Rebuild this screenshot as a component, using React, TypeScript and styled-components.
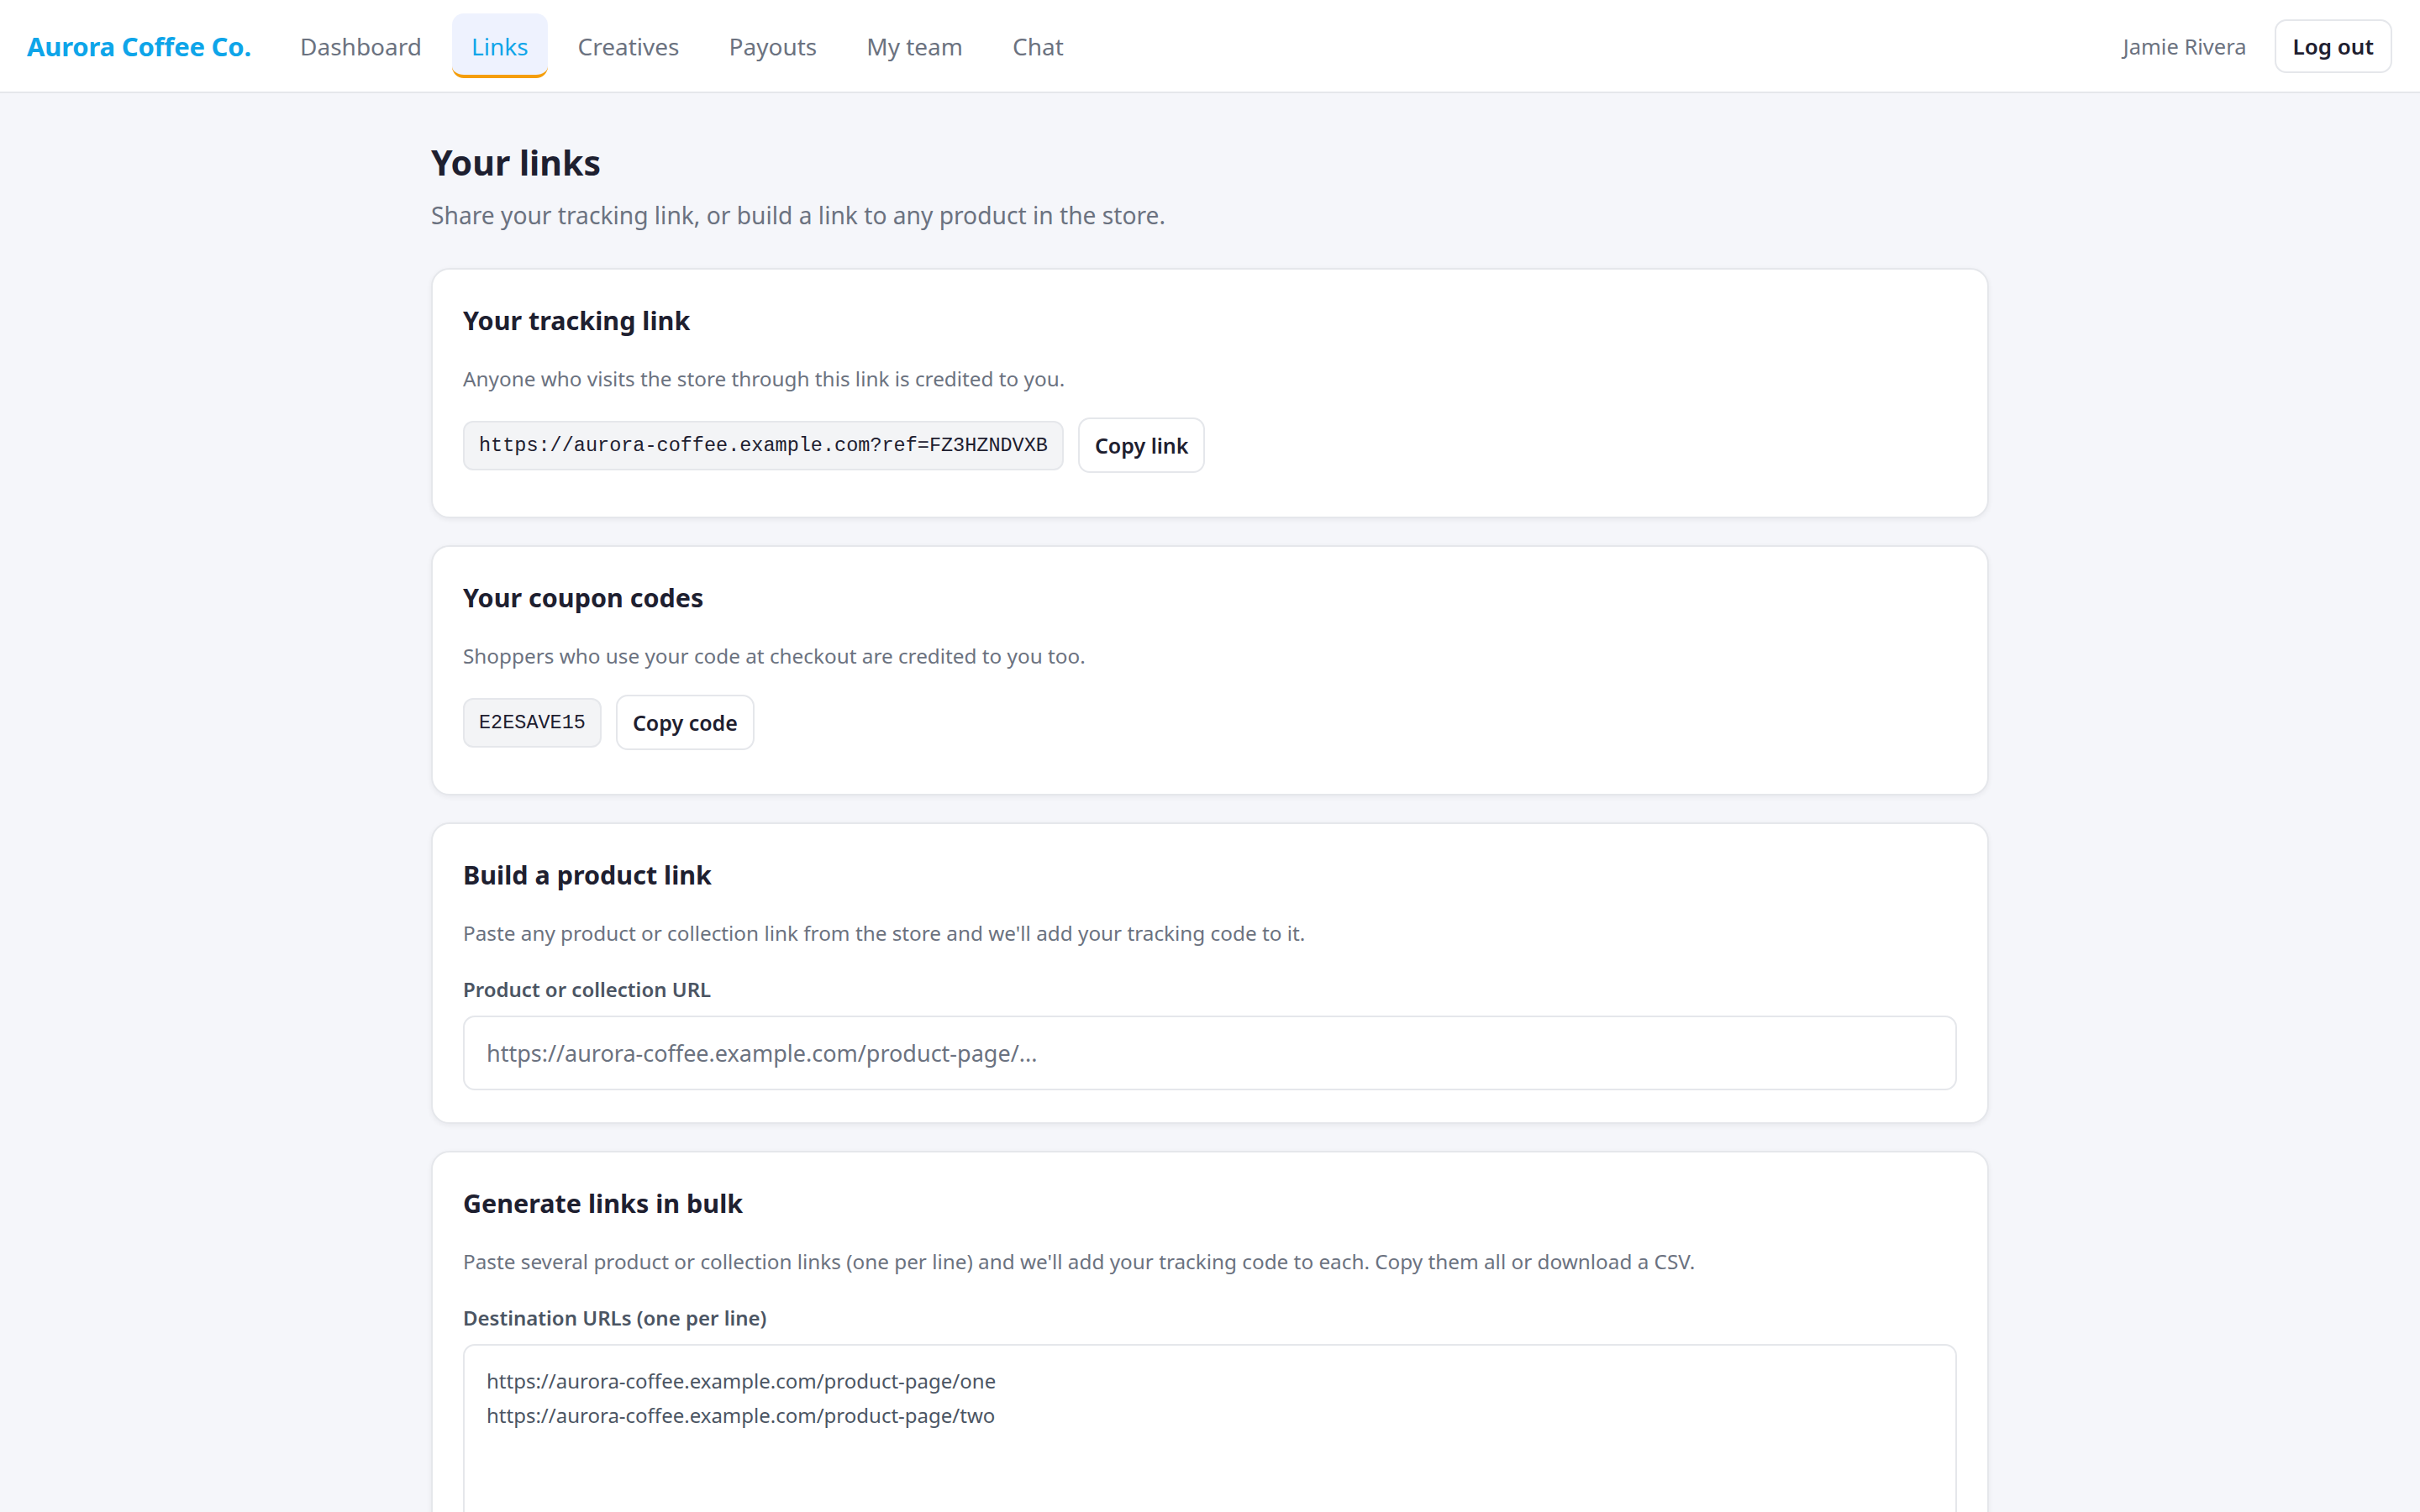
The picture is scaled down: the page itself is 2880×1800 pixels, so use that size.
import React, { useState } from 'react'
import styled, { createGlobalStyle } from 'styled-components'

const GlobalStyle = createGlobalStyle`
  * { box-sizing: border-box; }
  body {
    margin: 0;
    background: #f5f6fa;
    font-family: "Noto Sans", "Open Sans", sans-serif;
    color: #1e2030;
  }
`

const Header = styled.header`
  height: 111px;
  background: #fff;
  border-bottom: 2px solid #e5e7eb;
  display: flex;
  align-items: center;
  padding: 0 33px 0 32px;
`

const Logo = styled.div`
  font-size: 31px;
  font-weight: 700;
  color: #0ea5e9;
  margin-right: 35px;
  letter-spacing: -0.2px;
`

const Nav = styled.nav`
  display: flex;
  align-items: center;
  gap: 13px;
`

const NavItem = styled.a<{ $active?: boolean }>`
  height: 77px;
  display: flex;
  align-items: center;
  padding: 4px 23px 0;
  font-size: 28px;
  color: ${(p) => (p.$active ? '#0ea5e9' : '#6b7280')};
  background: ${(p) => (p.$active ? '#eef2fe' : 'transparent')};
  border-radius: 14px;
  border-bottom: 4px solid ${(p) => (p.$active ? '#f59e0b' : 'transparent')};
  cursor: pointer;
`

const UserArea = styled.div`
  margin-left: auto;
  display: flex;
  align-items: center;
  gap: 33px;
`

const UserName = styled.span`
  font-size: 25.5px;
  color: #6b7280;
`

const Button = styled.button`
  height: 66px;
  padding: 0 18px;
  background: #fff;
  border: 2px solid #e5e7eb;
  border-radius: 14px;
  font-family: inherit;
  font-size: 25px;
  font-weight: 600;
  color: #1e2030;
  cursor: pointer;
`

const HeaderButton = styled(Button)`
  height: 64px;
  padding: 0 20px;
  font-size: 26px;
`

const Main = styled.main`
  width: 1854px;
  margin: 0 auto;
  padding: 54px 0 60px;
`

const PageTitle = styled.h1`
  margin: 0;
  font-size: 41px;
  line-height: 56px;
  font-weight: 700;
`

const PageSub = styled.p`
  margin: 14px 0 42px;
  font-size: 28.2px;
  line-height: 42px;
  color: #6b7280;
`

const Card = styled.section`
  background: #fff;
  border: 2px solid #e5e7eb;
  border-radius: 22px;
  box-shadow: 0 2px 6px rgba(17, 24, 39, 0.06);
  padding: 37px 36px 38px;
  margin-bottom: 32px;
`

const CardTitle = styled.h2`
  margin: 0;
  font-size: 30.5px;
  line-height: 46px;
  font-weight: 700;
`

const CardText = styled.p`
  margin: 28px 0 0;
  font-size: 24.3px;
  line-height: 38px;
  color: #6b7280;
`

const Row = styled.div`
  display: flex;
  align-items: center;
  gap: 17px;
  margin: 27px 0 14px;
`

const Code = styled.code`
  display: inline-block;
  height: 59px;
  line-height: 55px;
  padding: 0 17px;
  background: #f3f4f6;
  border: 2px solid #e5e7eb;
  border-radius: 12px;
  font-family: "Liberation Mono", "DejaVu Sans Mono", monospace;
  font-size: 23.5px;
  color: #1e2030;
`

const Label = styled.label`
  display: block;
  margin: 30px 0 13px;
  font-size: 24px;
  line-height: 36px;
  font-weight: 600;
  color: #4b5563;
`

const Input = styled.input`
  display: block;
  width: 100%;
  height: 89px;
  padding: 0 26px;
  border: 2px solid #e5e7eb;
  border-radius: 14px;
  font-family: inherit;
  font-size: 27px;
  color: #1e2030;
  outline: none;

  &::placeholder {
    color: #6b7280;
  }
`

const TextArea = styled.textarea`
  display: block;
  width: 100%;
  height: 300px;
  padding: 21px 26px;
  border: 2px solid #e5e7eb;
  border-radius: 14px;
  font-family: inherit;
  font-size: 24px;
  line-height: 41px;
  color: #4b5563;
  resize: vertical;
  outline: none;
`

const navItems = ['Dashboard', 'Links', 'Creatives', 'Payouts', 'My team', 'Chat']

const App = () => {
  const [productUrl, setProductUrl] = useState('')
  const [bulk, setBulk] = useState(
    'https://aurora-coffee.example.com/product-page/one\nhttps://aurora-coffee.example.com/product-page/two'
  )

  return (
    <>
      <GlobalStyle />
      <Header>
        <Logo>Aurora Coffee Co.</Logo>
        <Nav>
          {navItems.map((item) => (
            <NavItem key={item} $active={item === 'Links'}>
              {item}
            </NavItem>
          ))}
        </Nav>
        <UserArea>
          <UserName>Jamie Rivera</UserName>
          <HeaderButton>Log out</HeaderButton>
        </UserArea>
      </Header>

      <Main>
        <PageTitle>Your links</PageTitle>
        <PageSub>Share your tracking link, or build a link to any product in the store.</PageSub>

        <Card>
          <CardTitle>Your tracking link</CardTitle>
          <CardText>Anyone who visits the store through this link is credited to you.</CardText>
          <Row>
            <Code>https://aurora-coffee.example.com?ref=FZ3HZNDVXB</Code>
            <Button>Copy link</Button>
          </Row>
        </Card>

        <Card>
          <CardTitle>Your coupon codes</CardTitle>
          <CardText>Shoppers who use your code at checkout are credited to you too.</CardText>
          <Row>
            <Code>E2ESAVE15</Code>
            <Button>Copy code</Button>
          </Row>
        </Card>

        <Card>
          <CardTitle>Build a product link</CardTitle>
          <CardText>
            Paste any product or collection link from the store and we'll add your tracking code to it.
          </CardText>
          <Label htmlFor="product-url">Product or collection URL</Label>
          <Input
            id="product-url"
            value={productUrl}
            placeholder="https://aurora-coffee.example.com/product-page/..."
            onChange={(e) => setProductUrl(e.target.value)}
          />
        </Card>

        <Card>
          <CardTitle>Generate links in bulk</CardTitle>
          <CardText>
            Paste several product or collection links (one per line) and we'll add your tracking code to
            each. Copy them all or download a CSV.
          </CardText>
          <Label htmlFor="bulk-urls">Destination URLs (one per line)</Label>
          <TextArea id="bulk-urls" value={bulk} onChange={(e) => setBulk(e.target.value)} />
        </Card>
      </Main>
    </>
  )
}

export default App
